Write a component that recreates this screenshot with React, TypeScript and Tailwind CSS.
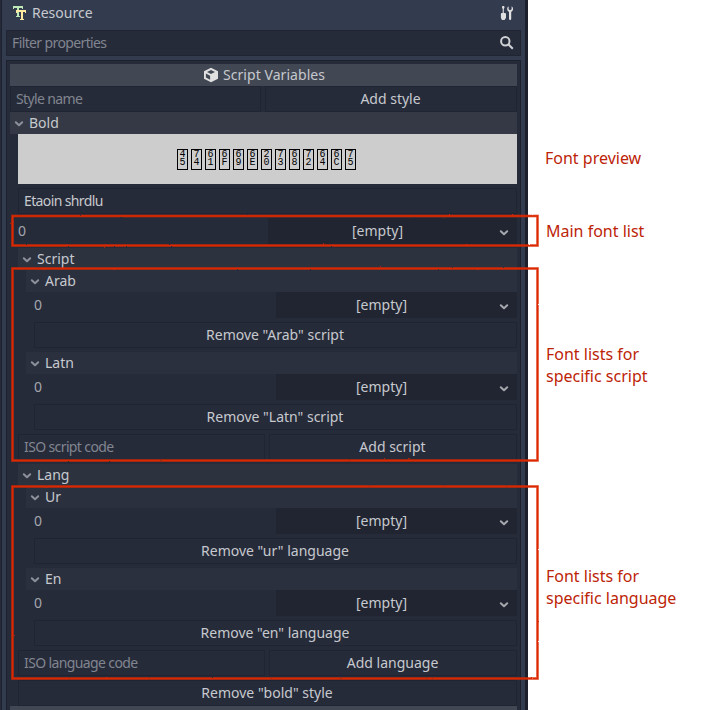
import type { ReactNode } from "react";

const PREVIEW_CODES = ["45", "74", "61", "6F", "69", "6E", "20", "73", "68", "72", "64", "6C", "75"];

function Chevron({ className = "" }: { className?: string }) {
  return (
    <svg className={className} width="10" height="8" viewBox="0 0 10 8" fill="none">
      <path d="M1.8 2.2 5 5.2 8.2 2.2" stroke="currentColor" strokeWidth="2" strokeLinecap="round" strokeLinejoin="round" />
    </svg>
  );
}

function FontIcon() {
  return (
    <svg width="14" height="15" viewBox="0 0 14 15" shapeRendering="crispEdges">
      <path d="M0 0h10v3H9V2H6v8h1v1H3v-1h1V2H1v1H0z" fill="#bfe8b8" />
      <path d="M3 4h10v3h-1V6h-2v7h1v1H7v-1h1V6H4v1H3z" fill="#ffeaa0" />
    </svg>
  );
}

function ToolsIcon() {
  return (
    <svg width="14" height="16" viewBox="0 0 14 16" fill="#e0e0e0">
      <path d="M2.300 1h1.800l.4 1.600-.7 1.400v4h1.300a.9.900 0 0 1 .9.900v3.800L4.600 15H1.900L.9 12.700V8.900a.9.900 0 0 1 .9-.9h.9V4L2 2.600z" />
      <path d="M8.600 1.200A3.200 3.200 0 0 0 8.500 6.500l.5.4V14a1.100 1.100 0 0 0 2.200 0V6.900l.5-.4a3.200 3.200 0 0 0-.1-5.300V4.300l-1.500.9-1.500-.9z" />
    </svg>
  );
}

function SearchIcon() {
  return (
    <svg width="16" height="16" viewBox="0 0 16 16" fill="none" stroke="#d0d2d6" strokeWidth="2">
      <circle cx="6.300" cy="6.300" r="4.200" />
      <path d="m9.300 9.300 4.500 4.500" />
    </svg>
  );
}

function CubeIcon() {
  return (
    <svg width="16" height="16" viewBox="0 0 16 16">
      <path d="M8 .8 15 4.200v7.600L8 15.200 1 11.800V4.200z" fill="#e0e0e0" />
      <path d="M8 3.100 12 5 8 7 4 5z" fill="#424754" />
      <path d="m2.900 6.600 4.200 2.100v4L2.900 10.600z" fill="#424754" />
    </svg>
  );
}

function Field({ children, className = "" }: { children: ReactNode; className?: string }) {
  return <div className={`flex h-[26px] items-center border border-[#212533] bg-[#262b3a] pl-[5px] tracking-[-0.62px] ${className}`}>{children}</div>;
}

function Button({ children, className = "" }: { children: ReactNode; className?: string }) {
  return <div className={`flex h-[26px] items-center justify-center border border-[#212533] bg-[#262b3a] pr-px ${className}`}>{children}</div>;
}

function Section({ children, className }: { children: ReactNode; className: string }) {
  return (
    <div className={`flex h-[22px] shrink-0 items-center pl-1 ${className}`}>
      <Chevron className="mr-[5px] mt-px text-[#8d919b]" />
      <span>{children}</span>
    </div>
  );
}

function FontRow({ main = false }: { main?: boolean }) {
  return (
    <div className="flex h-[26px] items-center">
      <span className={`text-[#a3a6ad] ${main ? "w-[250px]" : "w-[242px]"}`}>0</span>
      <div className="flex h-full flex-1 items-center bg-[#212531] pr-2">
        <span className="flex-1 pr-[12px] text-center">[empty]</span>
        <Chevron className="mt-1 text-[#a6a8ad]" />
      </div>
    </div>
  );
}

function FontEntry({ name, kind }: { name: string; kind: string }) {
  const key = kind === "language" ? name.toLowerCase() : name;
  return (
    <div className="pl-2">
      <Section className="bg-[#2b303f]">{name}</Section>
      <div className="flex flex-col gap-1 pl-2">
        <FontRow />
        <Button>Remove "{key}" {kind}</Button>
      </div>
    </div>
  );
}

function EntryGroup({ title, kind, names }: { title: string; kind: string; names: string[] }) {
  return (
    <div>
      <Section className="bg-[#2d323f]">{title}</Section>
      <div className="flex flex-col gap-1">
        {names.map((n) => (
          <FontEntry key={n} name={n} kind={kind} />
        ))}
        <div className="flex gap-1">
          <Field className="w-[247px] text-[#81858f]">ISO {kind} code</Field>
          <Button className="flex-1">Add {kind}</Button>
        </div>
      </div>
    </div>
  );
}

function Outlines() {
  const boxes = [
    { y: 216, h: 29.5 },
    { y: 268.5, h: 192 },
    { y: 486.5, h: 192 },
  ];
  return (
    <svg className="absolute left-0 top-0" width="710" height="710" fill="none">
      <filter id="rough" x="0" y="0" width="710" height="710" filterUnits="userSpaceOnUse" colorInterpolationFilters="sRGB">
        <feTurbulence type="fractalNoise" baseFrequency="0.35" numOctaves="2" seed="4" />
        <feDisplacementMap in="SourceGraphic" scale="1.6" xChannelSelector="R" yChannelSelector="G" />
      </filter>
      <g filter="url(#rough)">
        {boxes.map((b) => (
          <g key={b.y}>
            <rect x="12.500" y={b.y} width="525" height={b.h} stroke="#dc2800" strokeOpacity="0.5" strokeWidth="3" />
            <rect x="12.500" y={b.y} width="525" height={b.h} stroke="#dc2800" strokeWidth="1.700" />
          </g>
        ))}
      </g>
    </svg>
  );
}

export default function App() {
  return (
    <div className="relative flex h-[710px] w-[710px] overflow-hidden bg-white font-['Noto_Sans',sans-serif] text-[14px] leading-[22px] text-[#c6c9ce]">
      <main className="flex w-[528px] flex-col border-l border-r-[3px] border-l-[#252a38] border-r-[#1b202c] bg-[#333b4f]">
        <div className="flex h-full flex-col border-l border-[#1d222e] pl-1 pr-1">
          <header className="flex h-[30px] shrink-0 items-center pb-[4px] pl-[7px] pr-[7px]">
            <FontIcon />
            <span className="ml-[5px] flex-1">Resource</span>
            <ToolsIcon />
          </header>
          <div className="mb-1 flex h-[26px] shrink-0 items-center border border-[#212533] bg-[#262b3a] pl-[5px] pr-[5px] tracking-[-0.62px] text-[#81858f]">
            <span className="flex-1">Filter properties</span>
            <SearchIcon />
          </div>
          <div className="flex-1 border border-b-0 border-[#1d212e] bg-[#262b3a] pl-[3px] pr-[3px] pt-[3px]">
            <div className="flex h-[22px] items-center justify-center gap-1 bg-[#424754] pl-px">
              <CubeIcon />
              <span className="tracking-[0.06px]">Script Variables</span>
            </div>
            <div className="flex gap-1">
              <Field className="w-[251px] text-[#81858f]">Style name</Field>
              <Button className="flex-1">Add style</Button>
            </div>
            <Section className="bg-[#343945]">Bold</Section>
            <div className="flex flex-col gap-1 pl-2">
              <div className="flex h-[50px] items-center justify-center gap-[3px] bg-[#cdcdcd] pr-[2px] pt-px">
                {PREVIEW_CODES.map((c) => (
                  <div key={c} className="flex h-[21px] w-[11px] flex-col items-center border border-black pt-[1px] font-['Liberation_Mono',monospace] text-[10px] leading-[8px] text-black">
                    <span>{c[0]}</span>
                    <span>{c[1]}</span>
                  </div>
                ))}
              </div>
              <Field>Etaoin shrdlu</Field>
              <FontRow main />
              <EntryGroup title="Script" kind="script" names={["Arab", "Latn"]} />
              <EntryGroup title="Lang" kind="language" names={["Ur", "En"]} />
              <Button>Remove "bold" style</Button>
            </div>
            <div className="h-1 bg-[#424754]" />
          </div>
        </div>
      </main>
      <aside className="flex-1 pl-[18px] text-[16px] text-[#bd2407]">
        <p className="-ml-px mt-[147px]">Font preview</p>
        <p className="mt-[51px]">Main font list</p>
        <p className="mt-[101px]">Font lists for<br />specific script</p>
        <p className="mt-[178px]">Font lists for<br />specific language</p>
      </aside>
      <Outlines />
    </div>
  );
}
